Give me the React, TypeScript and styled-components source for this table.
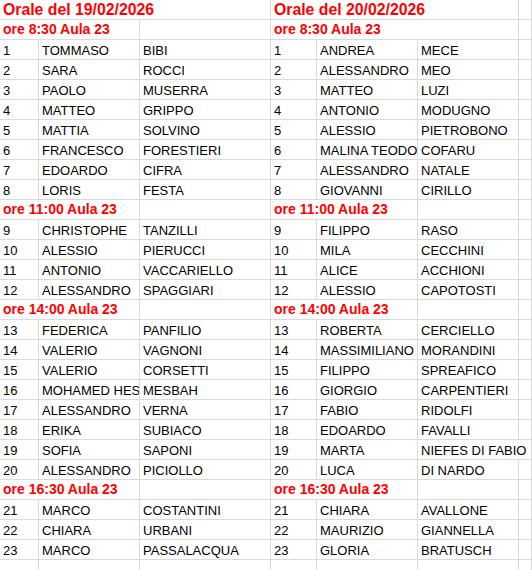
import * as React from "react";
import styled, { createGlobalStyle } from "styled-components";

const GlobalStyle = createGlobalStyle`
  body {
    margin: 0;
    background: #ffffff;
  }
`;

const Sheet = styled.div`
  display: grid;
  grid-template-columns: 39px 101px 131px 46px 101px 101px 1fr;
  grid-auto-rows: 20px;
  width: 532px;
  height: 570px;
  overflow: hidden;
  font-family: "Liberation Sans", Arial, sans-serif;
  color: #000000;
`;

const Cell = styled.div<{ $kind?: "title" | "section"; $span?: number; $clip?: boolean }>`
  box-sizing: border-box;
  grid-column: span ${(p) => p.$span || 1};
  border-right: 1px solid #dadada;
  border-bottom: 1px solid #dadada;
  padding: ${(p) => (p.$kind ? "1px" : "2px")} 0 0 3px;
  line-height: 17px;
  white-space: nowrap;
  overflow: ${(p) => (p.$clip ? "hidden" : "visible")};
  font-size: ${(p) => (p.$kind === "title" ? "15.8px" : p.$kind === "section" ? "14px" : "13px")};
  font-weight: ${(p) => (p.$kind ? 700 : 400)};
  color: ${(p) => (p.$kind ? "#ff0000" : "#000000")};
`;

type Person = [string, string];

const leftDay: Person[][] = [
  [["TOMMASO", "BIBI"], ["SARA", "ROCCI"], ["PAOLO", "MUSERRA"], ["MATTEO", "GRIPPO"], ["MATTIA", "SOLVINO"], ["FRANCESCO", "FORESTIERI"], ["EDOARDO", "CIFRA"], ["LORIS", "FESTA"]],
  [["CHRISTOPHE", "TANZILLI"], ["ALESSIO", "PIERUCCI"], ["ANTONIO", "VACCARIELLO"], ["ALESSANDRO", "SPAGGIARI"]],
  [["FEDERICA", "PANFILIO"], ["VALERIO", "VAGNONI"], ["VALERIO", "CORSETTI"], ["MOHAMED HESHAM", "MESBAH"], ["ALESSANDRO", "VERNA"], ["ERIKA", "SUBIACO"], ["SOFIA", "SAPONI"], ["ALESSANDRO", "PICIOLLO"]],
  [["MARCO", "COSTANTINI"], ["CHIARA", "URBANI"], ["MARCO", "PASSALACQUA"]],
];

const rightDay: Person[][] = [
  [["ANDREA", "MECE"], ["ALESSANDRO", "MEO"], ["MATTEO", "LUZI"], ["ANTONIO", "MODUGNO"], ["ALESSIO", "PIETROBONO"], ["MALINA TEODORA", "COFARU"], ["ALESSANDRO", "NATALE"], ["GIOVANNI", "CIRILLO"]],
  [["FILIPPO", "RASO"], ["MILA", "CECCHINI"], ["ALICE", "ACCHIONI"], ["ALESSIO", "CAPOTOSTI"]],
  [["ROBERTA", "CERCIELLO"], ["MASSIMILIANO", "MORANDINI"], ["FILIPPO", "SPREAFICO"], ["GIORGIO", "CARPENTIERI"], ["FABIO", "RIDOLFI"], ["EDOARDO", "FAVALLI"], ["MARTA", "NIEFES DI FABIO"], ["LUCA", "DI NARDO"]],
  [["CHIARA", "AVALLONE"], ["MAURIZIO", "GIANNELLA"], ["GLORIA", "BRATUSCH"]],
];

const slots = ["ore 8:30 Aula 23", "ore 11:00 Aula 23", "ore 14:00 Aula 23", "ore 16:30 Aula 23"];

export default function App(): JSX.Element {
  const rows: React.ReactNode[] = [];
  let n = 0;

  rows.push(
    <React.Fragment key="title">
      <Cell $kind="title" $span={3}>Orale del 19/02/2026</Cell>
      <Cell $kind="title" $span={3}>Orale del 20/02/2026</Cell>
      <Cell />
    </React.Fragment>
  );

  slots.forEach((slot, s) => {
    const first = s === 0;
    rows.push(
      <React.Fragment key={slot}>
        <Cell $kind="section" $span={2}>{slot}</Cell>
        <Cell />
        <Cell $kind="section" $span={first ? 3 : 2}>{slot}</Cell>
        {!first && <Cell />}
        <Cell />
      </React.Fragment>
    );
    leftDay[s].forEach((left, i) => {
      n += 1;
      const right = rightDay[s][i];
      // long surnames spill into the empty column next to them, like the sheet does
      const spill = right[1].length > 13;
      rows.push(
        <React.Fragment key={n}>
          <Cell>{n}</Cell>
          <Cell $clip>{left[0]}</Cell>
          <Cell>{left[1]}</Cell>
          <Cell>{n}</Cell>
          <Cell $clip>{right[0]}</Cell>
          <Cell $span={spill ? 2 : 1}>{right[1]}</Cell>
          {!spill && <Cell />}
        </React.Fragment>
      );
    });
  });

  for (let i = 0; i < 7; i++) rows.push(<Cell key={"e" + i} />);

  return (
    <>
      <GlobalStyle />
      <Sheet>{rows}</Sheet>
    </>
  );
}
